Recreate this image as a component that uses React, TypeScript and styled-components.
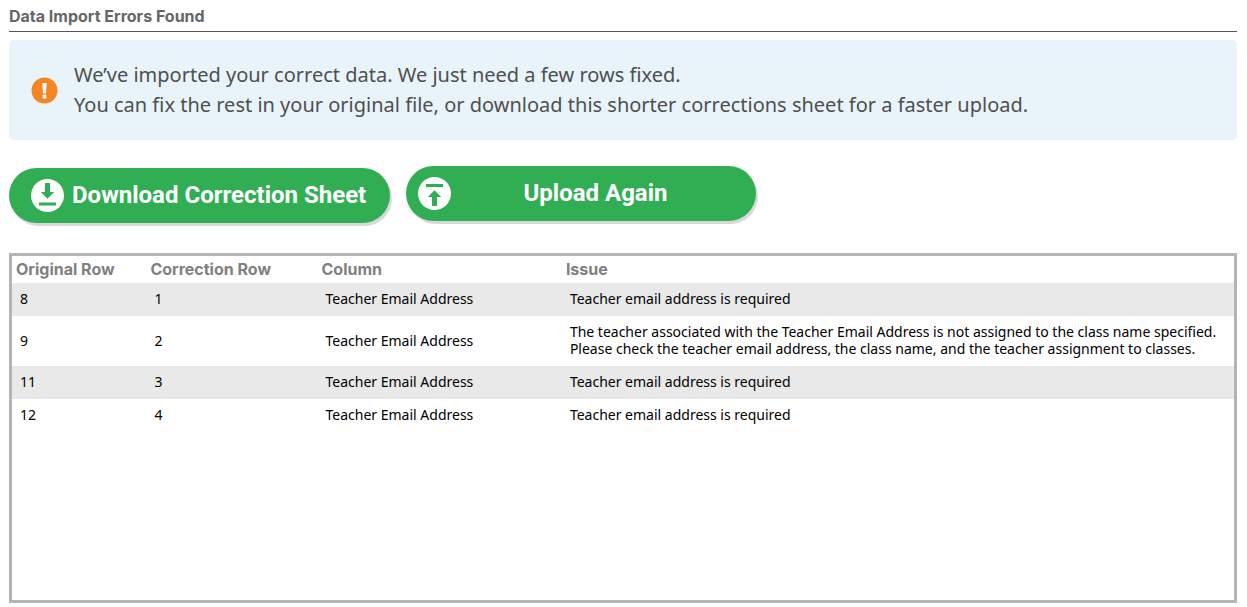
import React from 'react';
import styled, { createGlobalStyle } from 'styled-components';

const GlobalStyle = createGlobalStyle`
  *, *::before, *::after { box-sizing: border-box; }
  body {
    margin: 0;
    background: #fff;
    color: #000;
    font-family: "Noto Sans", sans-serif;
  }
`;

const Page = styled.main`
  display: flex;
  flex-direction: column;
  min-height: 100vh;
  padding: 4px 10px 4px 9px;
`;

const Title = styled.h1`
  margin: 0 0 8px;
  padding-bottom: 2px;
  border-bottom: 1px solid #555;
  color: #666;
  font-family: Inter, sans-serif;
  font-size: 16px;
  font-weight: 700;
  line-height: 25px;
`;

const Notice = styled.section`
  display: flex;
  align-items: center;
  gap: 16px;
  padding: 20px 22px;
  border-radius: 5px;
  background: #e9f4fa;
  color: #4f4f4f;
  font-size: 20px;
  line-height: 30px;
`;

const NoticeText = styled.p`
  margin: 0;
`;

const Icon = styled.svg`
  flex: none;
`;

const Actions = styled.div`
  display: flex;
  gap: 16px;
  min-height: 57px;
  margin: 26px 0 30px;
`;

const ActionButton = styled.button<{ $width: number; $inset: number; $align: string }>`
  display: flex;
  align-items: center;
  align-self: ${(p) => p.$align};
  gap: 8px;
  width: ${(p) => p.$width}px;
  height: 55px;
  padding: 0 24px 0 ${(p) => p.$inset}px;
  border: 0;
  border-radius: 28px;
  background: #31ae54;
  box-shadow: 2px 3px 0 #d9d9d9;
  color: #fff;
  font-family: Roboto, sans-serif;
  font-size: 24px;
  font-weight: 700;
  line-height: 30px;
  cursor: pointer;
`;

const ButtonLabel = styled.span`
  flex: 1;
  padding-bottom: 2px;
  text-align: center;
  white-space: nowrap;
`;

const TableFrame = styled.div`
  flex: 1;
  border: 3px solid #b4b4b4;
  overflow: auto;
`;

const Table = styled.table`
  width: 100%;
  border-collapse: collapse;
  table-layout: fixed;
  font-size: 14px;
  line-height: 17px;
`;

const HeadCell = styled.th<{ $share: number }>`
  width: ${(p) => p.$share}%;
  padding: 1px 4px;
  color: #808080;
  font-family: Inter, sans-serif;
  font-size: 16px;
  font-weight: 700;
  line-height: 25px;
  text-align: left;
`;

const Row = styled.tr`
  &:nth-child(odd) { background: #e9e9e9; }
`;

const Cell = styled.td`
  padding: 7px 8px 9px;
  white-space: pre-line;
`;

const AlertIcon = () => (
  <Icon width="27" height="27" viewBox="0 0 27 27" role="img" aria-label="Warning">
    <circle cx="13.5" cy="13.5" r="13" fill="#f68423" />
    <path d="M11.3 6h4.4l-.7 10.4h-3zM11.6 17.7h3.8v3.8h-3.8z" fill="#fff" />
  </Icon>
);

const DownloadIcon = () => (
  <Icon width="33" height="33" viewBox="0 0 33 33" aria-hidden="true">
    <circle cx="16.5" cy="16.5" r="16.5" fill="#fff" />
    <path d="M14 4h5v9h4.200l-6.700 6.700L9.800 13H14zM8 23.500h17v3H8z" fill="#31ae54" />
  </Icon>
);

const UploadIcon = () => (
  <Icon width="33" height="33" viewBox="0 0 33 33" aria-hidden="true">
    <circle cx="16.5" cy="16.5" r="16.5" fill="#fff" />
    <path d="M8 7h17v3H8zM16.500 13.300l6.700 6.700H19v9h-5v-9H9.800z" fill="#31ae54" />
  </Icon>
);

const columns = [
  { label: 'Original Row', share: 11 },
  { label: 'Correction Row', share: 14 },
  { label: 'Column', share: 20 },
  { label: 'Issue', share: 55 },
];

const required = 'Teacher email address is required';

const issues = [
  { original: 8, correction: 1, issue: required },
  {
    original: 9,
    correction: 2,
    issue:
      'The teacher associated with the Teacher Email Address is not assigned to the class name specified.\nPlease check the teacher email address, the class name, and the teacher assignment to classes.',
  },
  { original: 11, correction: 3, issue: required },
  { original: 12, correction: 4, issue: required },
];

export default function App() {
  return (
    <>
      <GlobalStyle />
      <Page>
        <Title>Data Import Errors Found</Title>
        <Notice>
          <AlertIcon />
          <NoticeText>
            We’ve imported your correct data. We just need a few rows fixed.
            <br />
            You can fix the rest in your original file, or download this shorter corrections sheet for a faster upload.
          </NoticeText>
        </Notice>
        <Actions>
          <ActionButton type="button" $width={381} $inset={22} $align="flex-end">
            <DownloadIcon />
            <ButtonLabel>Download Correction Sheet</ButtonLabel>
          </ActionButton>
          <ActionButton type="button" $width={350} $inset={12} $align="flex-start">
            <UploadIcon />
            <ButtonLabel>Upload Again</ButtonLabel>
          </ActionButton>
        </Actions>
        <TableFrame>
          <Table>
            <thead>
              <tr>
                {columns.map((c) => (
                  <HeadCell key={c.label} scope="col" $share={c.share}>{c.label}</HeadCell>
                ))}
              </tr>
            </thead>
            <tbody>
              {issues.map((r) => (
                <Row key={r.original}>
                  <Cell>{r.original}</Cell>
                  <Cell>{r.correction}</Cell>
                  <Cell>Teacher Email Address</Cell>
                  <Cell>{r.issue}</Cell>
                </Row>
              ))}
            </tbody>
          </Table>
        </TableFrame>
      </Page>
    </>
  );
}
